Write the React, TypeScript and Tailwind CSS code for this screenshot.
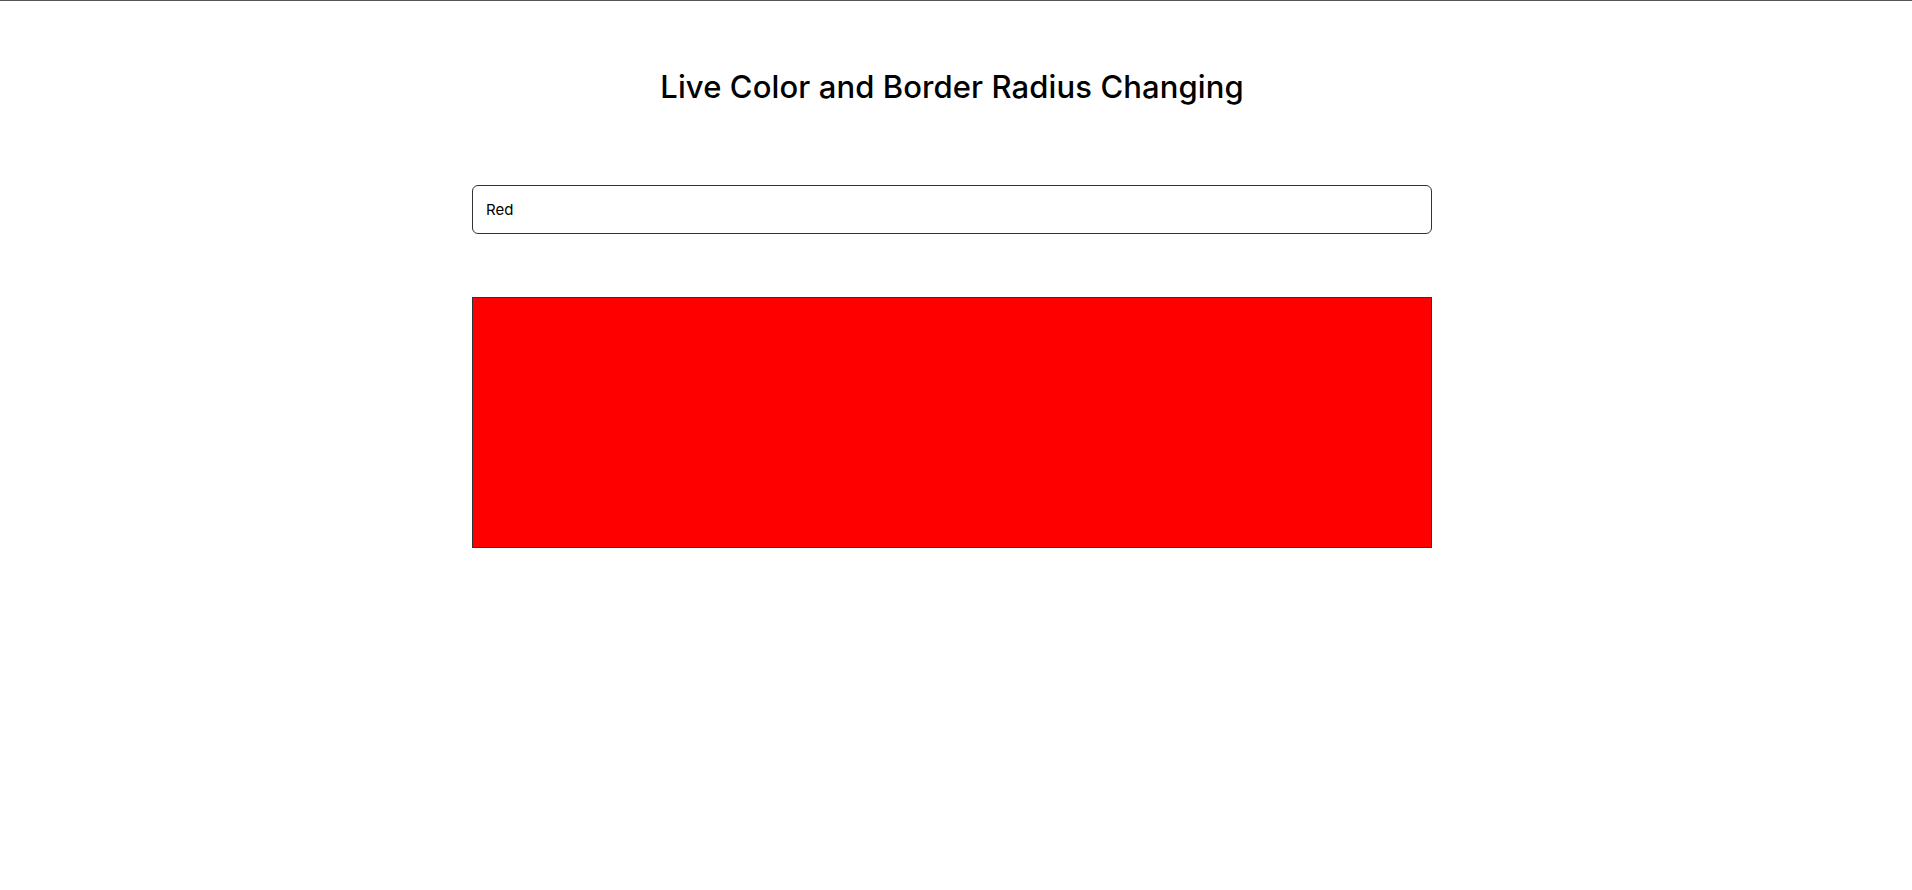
import React, { useState } from "react";

export default function App() {
  const [color, setColor] = useState("Red");
  return (
    <div
      className="min-h-[889px] w-full bg-white border-t border-[#555555] pr-[8px]"
      style={{ fontFamily: "Inter, 'Noto Sans', sans-serif" }}
    >
      <div className="mx-auto w-[960px] flex flex-col">
        <h1 className="text-center text-[31px] leading-[44px] font-medium text-black mt-[64px] tracking-[0.1px]">
          Live Color and Border Radius Changing
        </h1>
        <input
          value={color}
          onChange={(e) => setColor(e.target.value)}
          className="mt-[76px] h-[49px] w-full rounded-[6px] border border-[#333333] px-[13px] text-[15px] text-black outline-none"
        />
        <div className="mt-[63px] h-[251px] w-full border border-[#333333] bg-[#ff0000]" />
      </div>
    </div>
  );
}
